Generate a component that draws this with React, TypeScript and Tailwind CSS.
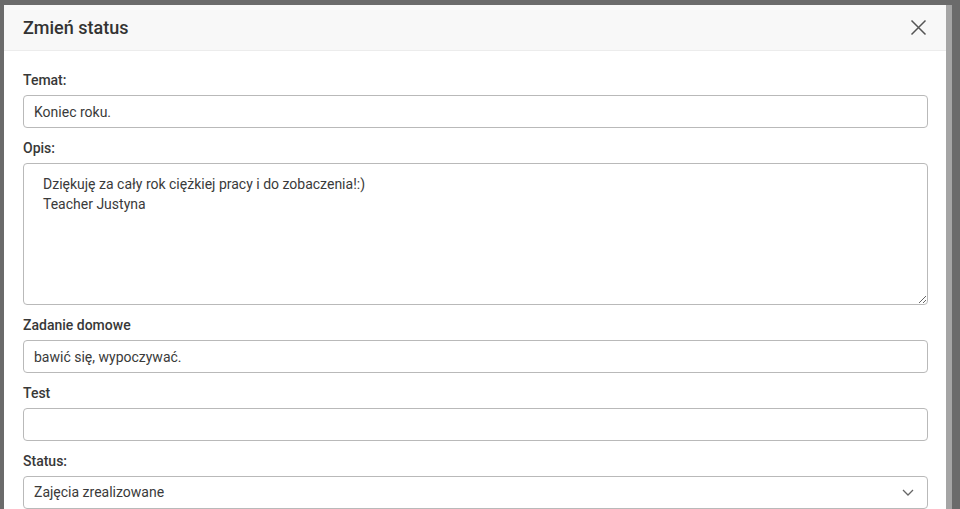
import React from 'react';

const font = { fontFamily: 'Roboto, "Liberation Sans", sans-serif' };

const Label: React.FC<{ children: React.ReactNode }> = ({ children }) => (
  <label className="block h-5 mb-[5px] text-[14px] leading-5 font-medium text-[#383838]">{children}</label>
);

const inputClass =
  'block w-full h-[33px] px-[10px] rounded-[4px] border border-[#b9b9b9] bg-white text-[14px] text-[#3a3a3a] outline-none';

export default function App() {
  return (
    <div className="h-[509px] w-[960px] overflow-hidden bg-[#6b6b6b] flex" style={font}>
      <div className="mt-[5px] ml-[4px] w-[942px] bg-white rounded-tl-[4px] flex flex-col">
        {/* Header */}
        <div className="h-[46px] flex items-center justify-between pl-[19px] pr-[18px] bg-[#f8f8f8] border-b border-[#ececec]">
          <h2 className="text-[18px] font-medium text-[#333]">Zmień status</h2>
          <button className="w-5 h-5 flex items-center justify-center text-[#555]">
            <svg width="17" height="17" viewBox="0 0 17 17" fill="none" stroke="currentColor" strokeWidth="1.5">
              <path d="M1.5 1.5 L15.5 15.5 M15.5 1.5 L1.5 15.5" />
            </svg>
          </button>
        </div>

        {/* Body */}
        <div className="pt-[19px] pl-[19px] pr-[18px]">
          <div className="mb-[10px]">
            <Label>Temat:</Label>
            <input className={inputClass} defaultValue="Koniec roku." readOnly />
          </div>
          <div className="mb-[10px]">
            <Label>Opis:</Label>
            <textarea
              className="block w-full h-[142px] pl-[19px] pr-[10px] pt-[10px] rounded-[4px] border border-[#b9b9b9] bg-white text-[14px] leading-5 text-[#3a3a3a] outline-none resize-y"
              defaultValue={'Dziękuję za cały rok ciężkiej pracy i do zobaczenia!:)\nTeacher Justyna'}
              readOnly
            />
          </div>
          <div className="mb-[10px]">
            <Label>Zadanie domowe</Label>
            <input className={inputClass} defaultValue="bawić się, wypoczywać." readOnly />
          </div>
          <div className="mb-[10px]">
            <Label>Test</Label>
            <input className={inputClass} defaultValue="" readOnly />
          </div>
          <div>
            <Label>Status:</Label>
            <div className="h-[33px] flex items-center justify-between px-[10px] rounded-[4px] border border-[#b9b9b9] text-[14px] text-[#3a3a3a]">
              <span>Zajęcia zrealizowane</span>
              <svg width="12" height="7" viewBox="0 0 12 7" fill="none" stroke="#666" strokeWidth="1.3" className="mr-[3px]">
                <path d="M1 1 L6 6 L11 1" />
              </svg>
            </div>
          </div>
        </div>
      </div>
      <div className="mt-[5px] w-[6px] bg-[#a5a5a5]" />
    </div>
  );
}
